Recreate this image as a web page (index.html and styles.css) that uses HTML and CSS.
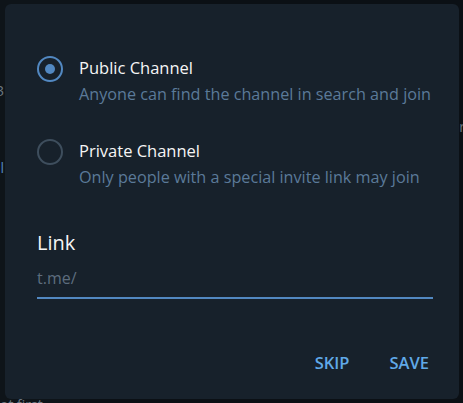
FILE: index.html
```html
<!DOCTYPE html>
<html lang="en">
<head>
    <meta charset="UTF-8">
    <meta name="viewport" content="width=device-width, initial-scale=1.0">
    <title>New Channel</title>
    <link rel="stylesheet" href="styles.css">
</head>
<body>
    <div class="backdrop">
        <div class="back-left">
            <span class="peek peek-num">3</span>
            <span class="peek peek-link">il</span>
            <span class="peek peek-last">ot first</span>
        </div>
        <div class="back-right">
            <span class="peek peek-r">r</span>
        </div>
    </div>

    <div class="dialog">
        <div class="options">
            <label class="option">
                <span class="radio checked"></span>
                <span class="option-text">
                    <span class="option-title">Public Channel</span>
                    <span class="option-desc">Anyone can find the channel in search and join</span>
                </span>
            </label>
            <label class="option">
                <span class="radio"></span>
                <span class="option-text">
                    <span class="option-title">Private Channel</span>
                    <span class="option-desc">Only people with a special invite link may join</span>
                </span>
            </label>
        </div>

        <div class="field">
            <div class="field-label">Link</div>
            <div class="field-input">t.me/</div>
        </div>

        <div class="buttons">
            <button class="btn">SKIP</button>
            <button class="btn">SAVE</button>
        </div>
    </div>
</body>
</html>
```
FILE: styles.css
```css
body {
    margin: 0;
    background-color: #0b1015;
    font-family: "Open Sans", "Noto Sans", sans-serif;
    overflow: hidden;
}

.backdrop {
    display: flex;
    justify-content: space-between;
    height: 403px;
}

.back-left {
    position: relative;
    width: 80px;
    background-color: #0e1419;
}

.back-right {
    position: relative;
    width: 10px;
}

.peek {
    position: absolute;
    font-size: 14px;
    color: #6c7883;
}

.peek-num { left: -4px; top: 81px; }
.peek-link { left: -3px; top: 158px; color: #5288c1; }
.peek-last { left: 0; top: 395px; }
.peek-r { right: -2px; top: 117px; }

.dialog {
    position: absolute;
    left: 5px;
    top: 4px;
    width: 454px;
    height: 395px;
    box-sizing: border-box;
    padding: 53px 26px 0 32px;
    background-color: #17212b;
    border-radius: 6px;
    display: flex;
    flex-direction: column;
}

.options {
    display: flex;
    flex-direction: column;
    gap: 35px;
}

.option {
    display: flex;
    gap: 16px;
    cursor: pointer;
}

.radio {
    flex: none;
    width: 26px;
    height: 26px;
    margin-top: -1px;
    box-sizing: border-box;
    border: 2px solid #3e4e5d;
    border-radius: 50%;
    display: flex;
    align-items: center;
    justify-content: center;
}

.radio.checked {
    border-color: #5288c1;
}

.radio.checked::after {
    content: "";
    width: 10px;
    height: 10px;
    border-radius: 50%;
    background-color: #5288c1;
}

.option-text {
    display: flex;
    flex-direction: column;
    gap: 4px;
}

.option-title {
    font-size: 16.5px;
    line-height: 22px;
    color: #f5f5f5;
}

.option-desc {
    font-size: 16.2px;
    line-height: 22px;
    color: #5b7a99;
}

.field {
    margin-top: 41px;
}

.field-label {
    font-size: 20px;
    line-height: 27px;
    color: #f5f5f5;
}

.field-input {
    margin-top: 11px;
    padding-bottom: 8px;
    font-size: 16px;
    line-height: 22px;
    color: #5d6d7e;
    border-bottom: 2px solid #5288c1;
}

.buttons {
    display: flex;
    justify-content: flex-end;
    gap: 40px;
    margin-top: 54px;
    margin-right: 4px;
}

.btn {
    padding: 0;
    background: none;
    border: none;
    font-family: inherit;
    font-size: 16.5px;
    font-weight: 600;
    line-height: 20px;
    color: #60a9e8;
    cursor: pointer;
}
```
